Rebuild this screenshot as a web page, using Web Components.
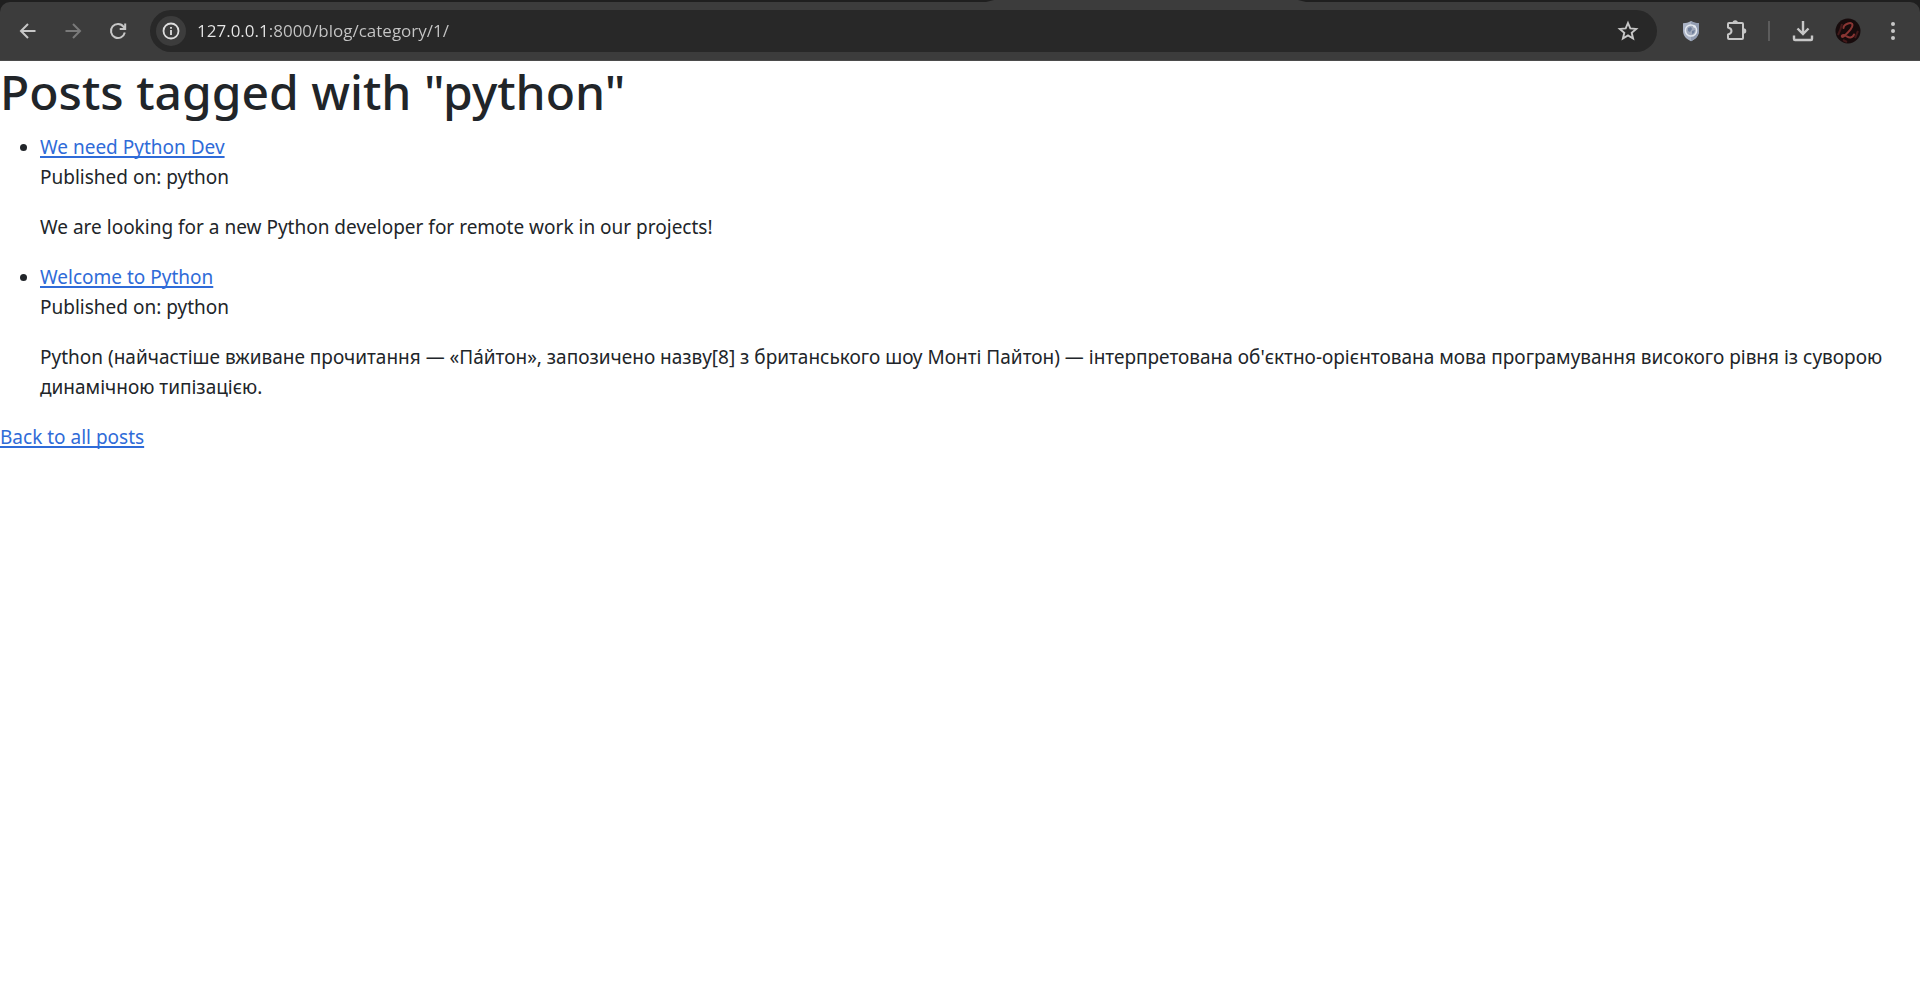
<!DOCTYPE html>
<html lang="uk">
<head>
<meta charset="utf-8">
<title>Posts tagged with "python"</title>
<style>
body { margin: 0; background: #fff; color: #212529; font: 20px/30px "Noto Sans", "Open Sans", sans-serif; }
</style>
</head>
<body>
<browser-bar>
  <icon-button slot="nav" label="Back"><svg width="24" height="24" viewBox="0 0 24 24" fill="none" stroke="#c7c7c7" stroke-width="2"><path d="M19.500 12H5.500M12 5L5 12l7 7"/></svg></icon-button>
  <icon-button slot="nav" label="Forward"><svg width="24" height="24" viewBox="0 0 24 24" fill="none" stroke="#7a7a7a" stroke-width="2"><path d="M4.500 12H18.500M12 5l7 7-7 7"/></svg></icon-button>
  <icon-button slot="nav" label="Reload"><svg width="24" height="24" viewBox="0 0 24 24" fill="none" stroke="#c7c7c7" stroke-width="2"><path d="M18.800 13.500A7 7 0 1 1 17.600 7.800L19 9.500M19.200 4.500V10H13.700"/></svg></icon-button>
  <address-box host-part="127.0.0.1" value="127.0.0.1:8000/blog/category/1/"></address-box>
  <icon-button slot="tools" label="Privacy shield"><svg width="24" height="24" viewBox="0 0 24 24"><path d="M12 2c2.600 1.600 5.200 2.200 8 2.300v7.200c0 5-3 8.500-8 10.700-5-2.200-8-5.700-8-10.700V4.300C6.800 4.200 9.400 3.600 12 2z" fill="#aab3c5"/><path d="M12 2c2.600 1.600 5.200 2.200 8 2.300v7.200c0 5-3 8.500-8 10.700z" fill="#929db2"/><circle cx="12" cy="11.500" r="5.600" fill="#a0a9bb" stroke="#e3e8f0" stroke-width="1.500"/><path d="M9 9l3-1 1 2-2 3-2-1zM13 12l3-1-1 3-2 1z" fill="#6f7f9b"/><circle cx="15.500" cy="7.500" r="1.300" fill="#e3e8f0"/></svg></icon-button>
  <icon-button slot="tools" label="Extensions"><svg width="24" height="24" viewBox="0 0 24 24"><path d="M5 4H18q1 0 1 1V19q0 1-1 1H5q-1 0-1-1V15.500q3.500-.800 3.500-3.500T4 8.500V5q0-1 1-1z" fill="none" stroke="#c7c7c7" stroke-width="2" stroke-linejoin="round"/><path d="M8.500 4a2.700 2.700 0 0 1 5.400 0zM19.500 9.200a2.800 2.800 0 0 1 0 5.600z" fill="#c7c7c7"/></svg></icon-button>
  <bar-divider slot="tools"></bar-divider>
  <icon-button slot="tools" label="Downloads"><svg width="24" height="24" viewBox="0 0 24 24" fill="none" stroke="#c7c7c7" stroke-width="2.400"><path d="M12 2V14.500M6.500 9.500L12 15l5.500-5.500M3 16.500V20q0 1 1 1H20q1 0 1-1V16.500"/></svg></icon-button>
  <icon-button slot="tools" label="Profile"><svg width="26" height="26" viewBox="0 0 26 26"><circle cx="13" cy="13" r="12.500" fill="#170b0c"/><path d="M3 17q3-6 4-11M20 20l3-7M8 22l4 2" stroke="#43191a" stroke-width="2" fill="none"/><path d="M8.500 10c0-4 9-7 9-3 0 4-5 8-9 11.500-2 1.500-2.500-1.500 0-1.500 3 0 4 3 7 2.500 2-.300 3-1.500 3.500-3" fill="none" stroke="#8a3533" stroke-width="2" stroke-linecap="round"/></svg></icon-button>
  <icon-button slot="tools" label="Menu"><svg width="24" height="24" viewBox="0 0 24 24" fill="#c7c7c7"><circle cx="12" cy="5" r="2"/><circle cx="12" cy="12" r="2"/><circle cx="12" cy="19" r="2"/></svg></icon-button>
</browser-bar>
<post-listing heading='Posts tagged with "python"'>
  <blog-post heading="We need Python Dev" category="python">We are looking for a new Python developer for remote work in our projects!</blog-post>
  <blog-post heading="Welcome to Python" category="python">Python (найчастіше вживане прочитання — «Па́йтон», запозичено назву[8] з британського шоу Монті Пайтон) — інтерпретована об'єктно-орієнтована мова програмування високого рівня із суворою динамічною типізацією.</blog-post>
</post-listing>
<script>
const define = (name, html, setup) => customElements.define(name, class extends HTMLElement {
  constructor() {
    super();
    this.attachShadow({ mode: "open" }).innerHTML = html;
  }
  connectedCallback() { if (setup) setup(this, this.shadowRoot); }
});

define("icon-button", `
<style>
:host { display: block; }
button { display: grid; place-items: center; width: 41px; height: 42px; padding: 0; border: 0; border-radius: 21px; background: none; }
</style>
<button type="button"><slot></slot></button>`,
(el, root) => root.querySelector("button").setAttribute("aria-label", el.getAttribute("label")));

define("bar-divider", `
<style>:host { display: block; width: 2px; height: 20px; margin: 0 8px; background: #5c5c5c; }</style>`);

define("address-box", `
<style>
:host { display: flex; align-items: center; flex: 1; height: 42px; margin: 0 9px 0 8px; padding: 0 9px 0 6px; box-sizing: border-box; border-radius: 21px; background: #282828; }
button { display: grid; place-items: center; padding: 0; border: 0; background: none; width: 41px; height: 42px; }
.info { width: 30px; height: 30px; border-radius: 50%; background: #3c3c3c; }
input { flex: 1; min-width: 0; margin: 0 0 0 11px; padding: 0; border: 0; outline: 0; height: 30px; font: 17px/30px "Open Sans", "Noto Sans", sans-serif; color: #c7c7c7; -webkit-text-fill-color: transparent; background: linear-gradient(to right, #e8e8e8 var(--host-width), #c7c7c7 var(--host-width)); -webkit-background-clip: text; background-clip: text; }
</style>
<button class="info" type="button" aria-label="View site information"><svg width="20" height="20" viewBox="0 0 20 20"><circle cx="10" cy="10" r="7.500" fill="none" stroke="#dedede" stroke-width="1.800"/><path d="M10 9v5M10 6v1.800" stroke="#dedede" stroke-width="1.800"/></svg></button>
<input type="text" aria-label="Address" spellcheck="false">
<button type="button" aria-label="Bookmark"><svg width="24" height="24" viewBox="0 0 24 24"><path d="M12 4l2.300 5.400 5.900.500-4.500 3.900 1.400 5.700-5.100-3.100-5.100 3.100 1.400-5.700-4.500-3.900 5.900-.500z" fill="none" stroke="#c7c7c7" stroke-width="1.900"/></svg></button>`,
(el, root) => {
  const input = root.querySelector("input");
  input.value = el.getAttribute("value");
  const pen = document.createElement("canvas").getContext("2d");
  pen.font = '17px "Open Sans", "Noto Sans", sans-serif';
  const width = Math.round(pen.measureText(el.getAttribute("host-part")).width);
  input.style.setProperty("--host-width", width + "px");
});

define("browser-bar", `
<style>
:host { display: block; background: #1f1f1f; }
.tabs { display: grid; grid-template-columns: 493fr 160fr 307fr; height: 2px; }
.tab { grid-column: 2; background: #3c3c3c; clip-path: polygon(8px 0, calc(100% - 8px) 0, 100% 100%, 0 100%); }
.bar { display: flex; align-items: center; height: 58px; padding: 0 7px; border-bottom: 1px solid #4b4b4b; border-radius: 10px 10px 0 0; background: #3c3c3c; }
.group { display: flex; align-items: center; gap: 4px; }
.nav { padding-right: 4px; }
.tools { padding-left: 4px; }
</style>
<header>
<div class="tabs"><div class="tab"></div></div>
<div class="bar"><nav class="group nav"><slot name="nav"></slot></nav><slot></slot><div class="group tools"><slot name="tools"></slot></div></div>
</header>`);

define("blog-post", `
<style>
:host { display: list-item; }
a { color: #2f6bd8; text-decoration: underline; text-decoration-thickness: 2px; text-underline-offset: 2px; text-decoration-skip-ink: none; }
p { margin: 0 0 20px; }
</style>
<a href="#"></a>
<p class="meta"></p>
<p><slot></slot></p>`,
(el, root) => {
  root.querySelector("a").textContent = el.getAttribute("heading");
  const meta = root.querySelector(".meta");
  meta.textContent = "Published on: " + el.getAttribute("category");
});

define("post-listing", `
<style>
:host { display: block; padding-top: 1px; font-size: 19px; }
h1 { margin: 0 0 10px; font-size: 48px; line-height: 60px; font-weight: 500; }
.posts { padding-left: 40px; list-style: disc outside; }
a { color: #2f6bd8; text-decoration: underline; text-decoration-thickness: 2px; text-underline-offset: 2px; text-decoration-skip-ink: none; }
</style>
<main>
<h1></h1>
<div class="posts" role="list"><slot></slot></div>
<a href="#">Back to all posts</a>
</main>`,
(el, root) => { root.querySelector("h1").textContent = el.getAttribute("heading"); });

for (const post of document.querySelectorAll("blog-post")) post.setAttribute("role", "listitem");
</script>
</body>
</html>
